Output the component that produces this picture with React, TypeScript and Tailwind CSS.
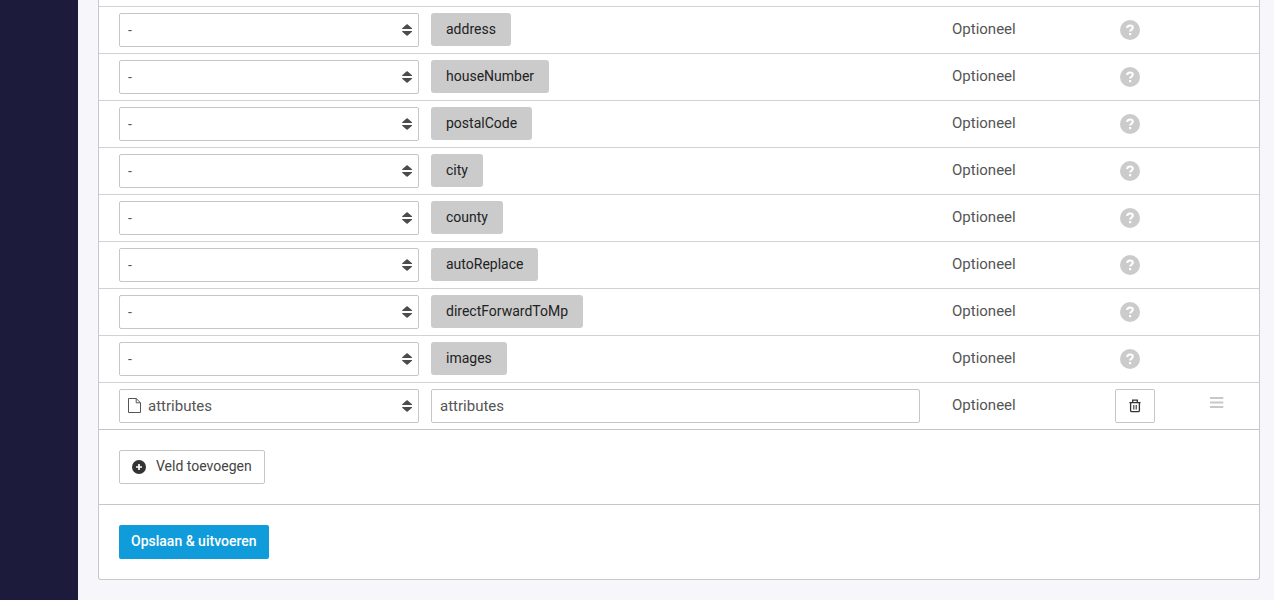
import React from "react";

const fields = [
  "address",
  "houseNumber",
  "postalCode",
  "city",
  "county",
  "autoReplace",
  "directForwardToMp",
  "images",
];

const cell = "border-t border-[#d2d2d2] py-1.5";

function SortArrows() {
  return (
    <svg
      className="pointer-events-none absolute top-1/2 right-1.5 h-3 w-3 -translate-y-1/2 fill-[#4c4c4c]"
      viewBox="0 0 12 12"
      aria-hidden="true"
    >
      <path d="M5.8.2h.6L11 4.2V5H1.2v-.8zM5.8 11.8h.6L11 7.8V7H1.2v.8z" />
    </svg>
  );
}

function SourceSelect({ label, value }: { label: string; value?: string }) {
  return (
    <div className="relative">
      <select
        aria-label={label}
        defaultValue={value ?? "-"}
        className={`block h-[34px] w-full appearance-none rounded-xs border border-[#c6c6c6] bg-white pr-6 text-[#555] ${
          value ? "pt-px pl-7 text-[15px]" : "pl-2 text-sm"
        }`}
      >
        <option>-</option>
        <option>attributes</option>
      </select>
      {value && (
        <svg
          className="pointer-events-none absolute top-2 left-2 h-4 w-3.5 fill-none stroke-[#555]"
          viewBox="0 0 14 16"
          aria-hidden="true"
        >
          <path d="M1.5 1.5h7.7l4.3 4.3v9.7h-12zM9.2 1.5v4.3h4.3" />
        </svg>
      )}
      <SortArrows />
    </div>
  );
}

function HelpIcon() {
  return (
    <svg className="h-5 w-5" viewBox="0 0 20 20" aria-hidden="true">
      <circle cx="10" cy="10" r="10" fill="#cbcbcb" />
      <path
        d="M7.2 8.1C7.2 6.3 8.5 5.5 10 5.5s2.8.8 2.8 2.2c0 1.8-2.7 1.9-2.7 3.9"
        fill="none"
        stroke="#fff"
        strokeWidth="2.1"
      />
      <rect x="9" y="13" width="2.2" height="2.2" fill="#fff" />
    </svg>
  );
}

function TrashIcon() {
  return (
    <svg
      className="h-3.5 w-3 fill-none stroke-[#333]"
      viewBox="0 0 12 14"
      strokeWidth="1.3"
      aria-hidden="true"
    >
      <path d="M.4 3.6h11.2M3.7 3.4V1.2h4.6v2.2M1.6 3.8v7.6c0 .8.5 1.3 1.3 1.3h6.2c.8 0 1.3-.5 1.3-1.3V3.8" />
      <path d="M4.8 6v4.4M7.2 6v4.4" strokeWidth="1.1" />
    </svg>
  );
}

export default function App() {
  return (
    <div className="flex min-h-screen bg-[#f7f7fb] font-[Roboto,sans-serif] text-sm text-[#555]">
      <aside className="w-[78px] shrink-0 bg-[#1d1b3c]" />
      <main className="min-w-0 flex-1 pr-3.5 pb-5 pl-5">
        <form
          className="rounded-b-[3px] border border-t-0 border-[#c8c8cc] bg-white pt-1.5"
          onSubmit={(e) => e.preventDefault()}
        >
          <table className="w-full table-fixed border-separate border-spacing-0">
            <colgroup>
              <col className="w-[326px]" />
              <col />
              <col className="w-[183px]" />
              <col className="w-[95px]" />
              <col className="w-[55px]" />
            </colgroup>
            <tbody>
              {fields.map((name) => (
                <tr key={name}>
                  <td className={`${cell} pr-1.5 pl-5`}>
                    <SourceSelect label={name} />
                  </td>
                  <td className={`${cell} px-1.5 align-top`}>
                    <span className="inline-block h-[33px] rounded-[3px] bg-[#cbcbcb] px-[15px] text-sm leading-8 text-[#222]">
                      {name}
                    </span>
                  </td>
                  <td className={`${cell} pl-[26px] align-top text-[15px] leading-8`}>
                    Optioneel
                  </td>
                  <td className={`${cell} pl-[11px]`}>
                    <button type="button" aria-label={`Uitleg ${name}`} className="block">
                      <HelpIcon />
                    </button>
                  </td>
                  <td className={cell} />
                </tr>
              ))}
              <tr>
                <td className={`${cell} pr-1.5 pl-5`}>
                  <SourceSelect label="Bronveld" value="attributes" />
                </td>
                <td className={`${cell} px-1.5`}>
                  <input
                    aria-label="Veldnaam"
                    defaultValue="attributes"
                    className="block h-[34px] w-full rounded-xs border border-[#c6c6c6] bg-white px-2 text-[15px] text-[#555]"
                  />
                </td>
                <td className={`${cell} pl-[26px] align-top text-[15px] leading-8`}>Optioneel</td>
                <td className={`${cell} pl-1.5`}>
                  <button
                    type="button"
                    aria-label="Verwijderen"
                    className="flex h-[34px] w-10 items-center justify-center rounded-xs border border-[#c6c6c6] bg-white"
                  >
                    <TrashIcon />
                  </button>
                </td>
                <td className={`${cell} pl-1.5 align-top`}>
                  <button type="button" aria-label="Verplaatsen" className="block cursor-move pt-2">
                    <svg
                      className="h-3 w-3.5 fill-none stroke-[#c8c8c8]"
                      viewBox="0 0 14 12"
                      strokeWidth="2"
                      aria-hidden="true"
                    >
                      <path d="M0 1h13.3M0 5.5h13.3M0 10h13.3" />
                    </svg>
                  </button>
                </td>
              </tr>
            </tbody>
          </table>
          <div className="border-t border-[#c6c6c6] p-5">
            <button
              type="button"
              className="flex h-[34px] items-center gap-2.5 rounded-xs border border-[#c6c6c6] bg-white px-3 text-sm text-[#444]"
            >
              <svg className="h-3.5 w-3.5" viewBox="0 0 14 14" aria-hidden="true">
                <circle cx="7" cy="7" r="7" fill="#333" />
                <path d="M7 4v6M4 7h6" stroke="#fff" strokeWidth="1.7" />
              </svg>
              <span className="pb-0.5">Veld toevoegen</span>
            </button>
          </div>
          <div className="border-t border-[#c6c6c6] p-5">
            <button
              type="submit"
              className="block h-[34px] rounded-xs bg-[#109cda] px-3 pb-0.5 text-sm font-medium text-white"
            >
              Opslaan &amp; uitvoeren
            </button>
          </div>
        </form>
      </main>
    </div>
  );
}
